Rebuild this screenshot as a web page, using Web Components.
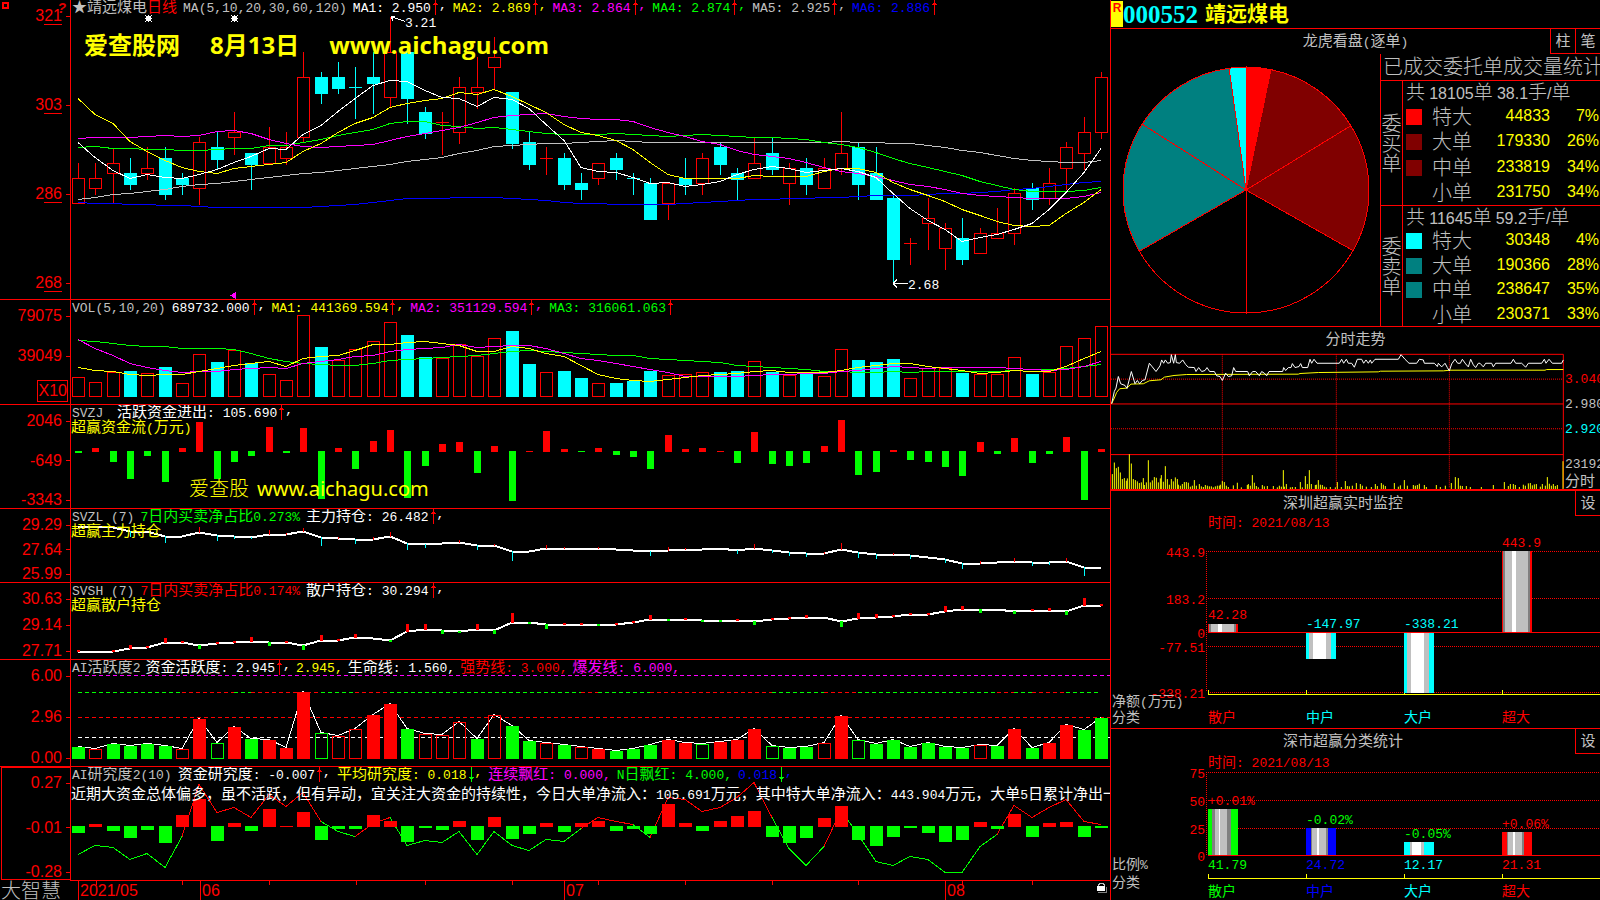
<!DOCTYPE html>
<html lang="zh-CN">
<head>
    <meta charset="UTF-8">
    <meta name="viewport" content="width=device-width, initial-scale=1.0">
    <title>靖远煤电 000552</title>
    <style>
        body {
            margin: 0;
            background: #000;
            color: #c0c0c0;
            font-family: "Noto Sans CJK SC", sans-serif;
            font-size: 15px;
        }
    </style>
</head>
<body>
    <stock-terminal></stock-terminal>

    <template id="tpl-terminal">
        <style>
            :host {
                display: grid;
                grid-template-columns: 1110fr 490fr;
                height: 100vh;
                min-height: 640px;
                overflow: hidden;
            }
            .left, .right { display: grid; min-width: 0; min-height: 0; grid-template-columns: minmax(0, 1fr); }
            .left { position: relative; grid-template-rows: 299fr 105fr 104fr 74fr 77fr 107fr 114fr 20fr; }
            .right { grid-template-rows: 28fr 298fr 163fr 239fr 172fr; border-left: 1px solid #f00; }
            .corner {
                position: absolute;
                top: 2px;
                left: 2px;
                display: flex;
                justify-content: space-between;
                width: 64px;
                color: #e00000;
                font: italic bold 14px/13px "Liberation Sans", sans-serif;
            }
            .corner i { width: 3px; height: 3px; border: 2px solid #f00; }
            .first { --edge: none; --axis-bottom: 8px; }
            .tight { --gap: 5px; }
            .title { line-height: 12px; white-space: nowrap; }
            .red { color: #f00; }
            .mark-top, .mark-mid { display: flex; color: #ff0; white-space: pre; }
            .mark-top {
                gap: 30px;
                margin: 16px 0 0 13px;
                font: bold 24px/28px "Open Sans", "Noto Sans CJK SC", sans-serif;
            }
            .mark-mid {
                gap: 8px;
                margin: 43px 0 0 118px;
                font: 20px/28px "Noto Sans", "Noto Sans CJK SC", sans-serif;
            }
            .mark-mid span { font-weight: 300; }
            .note { margin-top: 5px; }
            .unit {
                display: flex;
                justify-content: flex-end;
                align-items: flex-end;
                height: 14px;
                margin: 0 2px 2px 0;
            }
            .unit span {
                border: 1px solid #f00;
                padding: 0 0 0 1px;
                color: #f00;
                font: 16px/20px "Liberation Sans", sans-serif;
            }
        </style>
        <div class="left">
            <indicator-panel class="first">
                <axis-label slot="axis" text="3" under="21"></axis-label>
                <axis-label slot="axis" text="3" under="03"></axis-label>
                <axis-label slot="axis" text="2" under="86"></axis-label>
                <axis-label slot="axis" text="2" under="68"></axis-label>
                <div slot="legend" class="title">★靖远煤电<span class="red">日线</span></div>
                <read-out slot="legend" text="MA(5,10,20,30,60,120)"></read-out>
                <read-out slot="legend" color="#fff" text="MA1: 2.950" trend="up" comma></read-out>
                <read-out slot="legend" color="#ff0" text="MA2: 2.869" trend="up" comma></read-out>
                <read-out slot="legend" color="#f0f" text="MA3: 2.864" trend="up" comma></read-out>
                <read-out slot="legend" color="#0f0" text="MA4: 2.874" trend="up" comma></read-out>
                <read-out slot="legend" color="#c0c0c0" text="MA5: 2.925" trend="up" comma></read-out>
                <read-out slot="legend" color="#00f" text="MA6: 2.886" trend="up"></read-out>
                <div slot="note" class="mark-top"><span>爱查股网</span><span>8月13日</span><span>www.aichagu.com</span></div>
                <candle-chart></candle-chart>
            </indicator-panel>
            <indicator-panel>
                <axis-label slot="axis" text="79075"></axis-label>
                <axis-label slot="axis" text="39049"></axis-label>
                <div slot="axis" class="unit"><span>X10</span></div>
                <read-out slot="legend" text="VOL(5,10,20)"></read-out>
                <read-out slot="legend" color="#fff" text="689732.000" trend="up" comma></read-out>
                <read-out slot="legend" color="#ff0" text="MA1: 441369.594" trend="up" comma></read-out>
                <read-out slot="legend" color="#f0f" text="MA2: 351129.594" trend="up" comma></read-out>
                <read-out slot="legend" color="#0f0" text="MA3: 316061.063" trend="up"></read-out>
                <volume-chart></volume-chart>
            </indicator-panel>
            <indicator-panel>
                <axis-label slot="axis" text="2046"></axis-label>
                <axis-label slot="axis" text="-649"></axis-label>
                <axis-label slot="axis" text="-3343"></axis-label>
                <read-out slot="legend" text="SVZJ "></read-out>
                <read-out slot="legend" color="#fff" text="活跃资金进出: 105.690" trend="up" comma></read-out>
                <read-out slot="note" color="#ff0" text="超赢资金流(万元)"></read-out>
                <div slot="note" class="mark-mid"><span>爱查股</span>www.aichagu.com</div>
                <flow-chart></flow-chart>
            </indicator-panel>
            <indicator-panel>
                <axis-label slot="axis" text="29.29"></axis-label>
                <axis-label slot="axis" text="27.64"></axis-label>
                <axis-label slot="axis" text="25.99"></axis-label>
                <read-out slot="legend" text="SVZL (7)"></read-out>
                <read-out slot="legend" color="#0f0" text="7日内买卖净占比0.273%"></read-out>
                <read-out slot="legend" color="#fff" text="主力持仓: 26.482" trend="up" comma></read-out>
                <read-out slot="note" color="#ff0" text="超赢主力持仓"></read-out>
                <holding-chart kind="main"></holding-chart>
            </indicator-panel>
            <indicator-panel>
                <axis-label slot="axis" text="30.63"></axis-label>
                <axis-label slot="axis" text="29.14"></axis-label>
                <axis-label slot="axis" text="27.71"></axis-label>
                <read-out slot="legend" text="SVSH (7)"></read-out>
                <read-out slot="legend" color="#f00" text="7日内买卖净占比0.174%"></read-out>
                <read-out slot="legend" color="#fff" text="散户持仓: 30.294" trend="up" comma></read-out>
                <read-out slot="note" color="#ff0" text="超赢散户持仓"></read-out>
                <holding-chart kind="retail"></holding-chart>
            </indicator-panel>
            <indicator-panel class="tight">
                <axis-label slot="axis" text="6.00"></axis-label>
                <axis-label slot="axis" text="2.96"></axis-label>
                <axis-label slot="axis" text="0.00"></axis-label>
                <read-out slot="legend" text="AI活跃度2"></read-out>
                <read-out slot="legend" color="#fff" text="资金活跃度: 2.945" trend="up" comma></read-out>
                <read-out slot="legend" color="#ff0" text="2.945,"></read-out>
                <read-out slot="legend" color="#fff" text="生命线: 1.560,"></read-out>
                <read-out slot="legend" color="#f00" text="强势线: 3.000,"></read-out>
                <read-out slot="legend" color="#f0f" text="爆发线: 6.000,"></read-out>
                <active-chart></active-chart>
            </indicator-panel>
            <indicator-panel boxed>
                <axis-label slot="axis" text="0.27"></axis-label>
                <axis-label slot="axis" text="-0.01"></axis-label>
                <axis-label slot="axis" text="-0.28"></axis-label>
                <read-out slot="legend" text="AI研究度2(10)"></read-out>
                <read-out slot="legend" color="#fff" text="资金研究度: -0.007" trend="up" comma></read-out>
                <read-out slot="legend" color="#ff0" text="平均研究度: 0.018" trend="down" comma></read-out>
                <read-out slot="legend" color="#f0f" text="连续飘红: 0.000,"></read-out>
                <read-out slot="legend" color="#0f0" text="N日飘红: 4.000,"></read-out>
                <read-out slot="legend" color="#00f" text="0.018" trend="down" comma></read-out>
                <read-out slot="note" class="note" color="#fff" text="近期大资金总体偏多，虽不活跃，但有异动，宜关注大资金的持续性，今日大单净流入：105.691万元，其中特大单净流入：443.904万元，大单5日累计净出一"></read-out>
                <research-chart></research-chart>
            </indicator-panel>
            <date-axis></date-axis>
            <div class="corner"><i></i>?</div>
        </div>
        <div class="right">
            <quote-header code="000552" name="靖远煤电"></quote-header>
            <side-panel heading="龙虎看盘(逐单)" centered>
                <button slot="tools" type="button">柱</button>
                <button slot="tools" type="button">笔</button>
                <order-board></order-board>
            </side-panel>
            <side-panel heading="分时走势" centered>
                <minute-chart></minute-chart>
            </side-panel>
            <side-panel heading="深圳超赢实时监控" thick>
                <button slot="tools" type="button">设</button>
                <category-chart kind="net"></category-chart>
            </side-panel>
            <side-panel heading="深市超赢分类统计">
                <button slot="tools" type="button">设</button>
                <category-chart kind="share"></category-chart>
            </side-panel>
        </div>
    </template>

    <template id="tpl-panel">
        <style>
            :host {
                display: grid;
                grid-template-columns: 71px minmax(0, 1fr);
                grid-template-rows: minmax(0, 1fr);
                border-top: var(--edge, 1px solid #f00);
                min-height: 0;
                overflow: hidden;
            }
            .axis {
                display: flex;
                flex-direction: column;
                justify-content: space-between;
                box-sizing: border-box;
                padding: 8px 0 var(--axis-bottom, 0);
                border-right: 1px solid #f00;
            }
            :host([boxed]) .axis { outline: 1px solid #f00; outline-offset: -1px; margin-left: 1px; }
            .plot { display: grid; grid-template: minmax(0, 1fr) / minmax(0, 1fr); min-height: 0; }
            .plot > * { grid-area: 1 / 1; min-width: 0; }
            .chart { display: grid; min-height: 0; grid-template: minmax(0, 1fr) / minmax(0, 1fr); }
            .over { z-index: 1; }
            .legend { display: flex; gap: var(--gap, 6px); padding: 0 0 3px 1px; white-space: nowrap; }
        </style>
        <div class="axis"><slot name="axis"></slot></div>
        <div class="plot">
            <div class="chart"><slot></slot></div>
            <div class="over">
                <div class="legend"><slot name="legend"></slot></div>
                <slot name="note"></slot>
            </div>
        </div>
    </template>

    <template id="tpl-side">
        <style>
            :host { display: flex; flex-direction: column; border-top: 1px solid #f00; min-height: 0; overflow: hidden; }
            :host([thick]) { border-top-width: 2px; }
            header { display: grid; grid-template-columns: minmax(0, 1fr) auto; height: 25px; flex: none; }
            h2 { margin: 0; font-size: 15px; font-weight: normal; line-height: 21px; text-align: center; }
            :host([centered]) h2 { grid-area: 1 / 1 / 2 / 3; }
            h2 span { font-family: "Liberation Mono", monospace; font-size: 13px; }
            .tools { display: flex; grid-area: 1 / 2; height: 25px; }
            ::slotted(button) {
                width: 25px;
                height: 25px;
                padding: 0 0 2px;
                border: solid #f00;
                border-width: 0 0 1px 1px;
                background: #000;
                color: #c0c0c0;
                font: inherit;
                line-height: 22px;
                cursor: pointer;
            }
            .body { flex: 1; display: grid; grid-template: minmax(0, 1fr) / minmax(0, 1fr); min-height: 0; }
        </style>
        <header><h2></h2><div class="tools"><slot name="tools"></slot></div></header>
        <div class="body"><slot></slot></div>
    </template>

    <template id="tpl-board">
        <style>
            :host { display: grid; grid-template-columns: 269fr 220fr; min-height: 0; }
            svg { display: block; width: 100%; height: 100%; min-height: 0; }
            .stats { border-left: 1px solid #f00; display: flex; flex-direction: column; min-width: 0; font-size: 20px; font-weight: 300; white-space: nowrap; }
            h3 { margin: 0; padding-left: 2px; height: 26px; font-size: 20px; font-weight: 300; line-height: 23px; }
            section { display: grid; grid-template-columns: 22px minmax(0, 1fr); border-top: 1px solid #f00; min-height: 0; }
            section:nth-of-type(1) { flex: 125; }
            section:nth-of-type(2) { flex: 121; }
            .side { border-right: 1px solid #f00; display: grid; align-content: center; justify-content: center; line-height: 20px; }
            table { width: 100%; border-collapse: collapse; table-layout: fixed; }
            caption { height: 22px; padding-left: 3px; line-height: 19px; text-align: left; font-size: 19px; }
            th, td { height: 24px; padding: 0; line-height: 24px; font-weight: 300; }
            th { width: 71px; text-align: left; }
            td { color: #ff0; text-align: right; }
            td, .num { font-family: "Liberation Sans", sans-serif; font-size: 16px; font-weight: normal; }
            td:last-child { width: 49px; padding-right: 1px; }
            i { display: inline-block; width: 16px; height: 16px; margin: 0 10px 0 3px; vertical-align: -1px; }
        </style>
        <svg viewBox="1111 54 269 272"></svg>
        <div class="stats">
            <h3>已成交委托单成交量统计</h3>
        </div>
    </template>

    <script>
        // 中文用15px,数字和字母单独用等宽13px
        function mixed(text) {
            return text.replace(/[\x20-\x7e]+/g, run => `<span class="a">${run}</span>`);
        }

        function stamp(host, id) {
            const root = host.attachShadow({ mode: "open" });
            root.appendChild(document.getElementById(id).content.cloneNode(true));
            return root;
        }

        // 每根K线的中心
        const cx = i => Math.round(78 + 17.34 * i);

        function polyline(values, color, width = 1, from = 0) {
            const points = values.map((y, i) => `${cx(i + from)},${y + 0.5}`).join(" ");
            return `<polyline points="${points}" fill="none" stroke="${color}" stroke-width="${width}"/>`;
        }

        function box(x, y, w, h, color, filled) {
            if (filled) return `<rect x="${x}" y="${y}" width="${w}" height="${h}" fill="${color}"/>`;
            return `<rect x="${x + 0.5}" y="${y + 0.5}" width="${w - 1}" height="${Math.max(h - 1, 0)}" fill="none" stroke="${color}"/>`;
        }

        // 最高,实体上沿,实体下沿,最低;r为涨,c为跌
        const candles = `r163,178,203,203 r163,178,188,194 r148,163,173,203 c158,173,184,189 r147,168,173,179
            c147,158,194,199 c173,178,184,194 r137,142,188,204 c132,147,159,169 r112,132,137,154
            c153,153,164,189 r127,147,163,163 r132,147,158,164 r52,77,137,142 c72,77,93,103
            c62,77,88,93 c67,87,87,118 c52,77,83,113 r17,52,97,107 c52,52,98,123
            c107,112,133,138 r112,122,122,154 r77,87,132,143 r57,87,92,108 r37,57,67,88
            c92,92,143,148 c132,142,164,169 r147,158,158,174 c153,158,184,189 c173,183,189,199
            r163,163,178,184 c153,158,169,179 c173,178,178,194 c178,183,219,219 r183,183,203,219
            c158,178,184,194 r153,158,183,194 c143,147,164,174 c168,173,179,199 r137,163,178,178
            c138,153,169,174 r163,168,183,204 c158,168,184,194 r158,168,188,188 r112,153,168,174
            c142,147,184,199 c147,173,199,199 c193,198,259,283 r238,243,243,264 r198,218,223,249
            r223,228,248,269 c218,238,259,264 r228,233,253,253 r208,233,238,238 r188,193,233,244
            c183,188,199,209 r168,183,198,204 r142,147,168,189 r117,132,153,169 r72,77,132,138`
            .split(/\s+/).map(s => ({ up: s[0] === "r", v: s.slice(1).split(",").map(Number) }));

        const RED = "#f00", CYAN = "#0ff", GREEN = "#0f0";

        class StockTerminal extends HTMLElement {
            constructor() {
                super();
                stamp(this, "tpl-terminal");
            }
        }

        class IndicatorPanel extends HTMLElement {
            constructor() {
                super();
                stamp(this, "tpl-panel");
            }
        }

        class AxisLabel extends HTMLElement {
            connectedCallback() {
                const root = this.shadowRoot || this.attachShadow({ mode: "open" });
                const under = this.getAttribute("under") || "";
                root.innerHTML = `
                    <style>
                        :host {
                            display: flex;
                            justify-content: flex-end;
                            align-items: center;
                            height: 16px;
                            color: #f00;
                            font: 16px/16px "Liberation Sans", sans-serif;
                        }
                        :host::after { content: ""; width: 4px; height: 1px; margin-left: 4px; background: #f00; }
                        u { text-decoration: none; border-bottom: 1px solid #f00; }
                    </style>
                    <span>${this.getAttribute("text")}${under && `<u>${under}</u>`}</span>
                `;
            }
        }

        class ReadOut extends HTMLElement {
            connectedCallback() {
                const root = this.shadowRoot || this.attachShadow({ mode: "open" });
                const trend = this.getAttribute("trend");
                const arrows = {
                    up: `<svg viewBox="0 0 8 15"><path d="M4.500 0v15M2 4.500h5M3 3.500h3" stroke="#f00"/></svg>`,
                    down: `<svg viewBox="0 0 8 15"><path d="M4.500 0v15M2 10.500h5M3 11.500h3" stroke="#0f0"/></svg>`
                };
                root.innerHTML = `
                    <style>
                        :host { display: flex; height: 12px; color: ${this.getAttribute("color") || "#c0c0c0"}; line-height: 12px; white-space: pre; }
                        .a { font-family: "Liberation Mono", monospace; font-size: 13px; }
                        svg { width: 8px; height: 15px; flex: none; shape-rendering: crispEdges; }
                    </style>
                    <span>${mixed(this.getAttribute("text"))}</span>${arrows[trend] || ""}${this.hasAttribute("comma") ? '<span class="a">,</span>' : ""}
                `.trim().replace(/>\s+</g, "><");
            }
        }

        // 左侧各图的公共部分
        class PlotChart extends HTMLElement {
            connectedCallback() {
                const root = this.shadowRoot || this.attachShadow({ mode: "open" });
                const [top, height] = this.range();
                root.innerHTML = `
                    <style>
                        :host { display: block; min-height: 0; overflow: hidden; }
                        svg { display: block; width: 100%; height: 100%; shape-rendering: crispEdges; }
                        text { font: 13px "Liberation Mono", monospace; fill: #fff; }
                    </style>
                    <svg viewBox="71 ${top} 1039 ${height}" preserveAspectRatio="none">${this.draw()}</svg>
                `;
            }
        }

        class CandleChart extends PlotChart {
            range() { return [0, 299]; }
            draw() {
                // 十字线的实体只有一像素,按实心画
                let out = candles.map(({ up, v }, i) => {
                    const color = up ? RED : CYAN;
                    const x = cx(i);
                    const [high, top, bottom, low] = v;
                    return box(x, high, 1, top - high, color, true) +
                        box(x, bottom, 1, low - bottom + 1, color, true) +
                        box(x - 6, top, 13, bottom - top + 1, color, !up || top === bottom);
                }).join("");
                out += polyline([202,203,203,204,204,205,205,206,207,207,207,207,207,207,206,205,204,202,200,198,198,198,197,197,197,198,199,200,202,203,203,204,204,204,204,203,202,201,200,199,199,198,198,197,197,196,195,195,195,194,193,193,192,191,189,188,186,184,182,181], "#00f");
                out += polyline([199,197,194,193,191,189,186,184,183,181,179,177,175,173,172,170,168,166,164,161,159,157,153,150,146,145,144,143,143,142,141,140,141,142,142,142,142,142,142,142,142,142,142,142,141,142,142,143,143,145,147,150,152,155,158,160,161,162,162,160], "#c0c0c0");
                out += polyline([147,146,148,148,149,149,150,150,149,148,148,145,145,142,139,135,132,129,123,121,121,125,126,128,127,129,131,133,134,134,134,133,134,135,136,135,134,135,136,137,137,138,139,142,144,147,152,158,163,167,171,175,181,185,189,191,191,191,190,187], GREEN);
                out += polyline([138,137,137,137,136,135,136,135,131,130,133,139,143,146,147,146,145,144,140,136,133,130,127,122,117,115,114,113,116,118,119,119,121,127,132,136,141,144,150,154,156,158,162,167,171,173,176,180,184,186,189,193,195,196,197,198,198,198,196,192], "#f0f");
                out += polyline([98,114,123,141,151,160,167,171,173,168,166,164,162,151,143,132,123,117,107,103,100,98,92,94,89,96,104,112,124,132,135,140,149,162,174,178,178,178,178,175,176,176,176,171,168,168,172,182,189,195,201,209,215,221,225,226,225,213,202,189], "#ff0");
                out += polyline([142,157,170,178,174,177,178,174,169,162,156,148,149,134,125,111,98,85,80,81,90,97,98,106,97,99,108,124,140,167,171,172,177,183,182,186,184,181,174,169,166,168,172,170,168,171,177,193,208,220,229,241,237,234,229,223,209,192,172,148], "#fff");
                // 最高价、最低价标注
                out += `<path d="M391 16.500l14 5M391 16.500h4M391 16.500l2 4M893 283.500h15M893 283.500l4-4M893 283.500l4 4" fill="none" stroke="#fff"/>
                    <text x="405" y="27">3.21</text><text x="908" y="289">2.68</text>`;
                for (const x of [148, 234]) {
                    out += `<path d="M${x - 2} 16h5v5h-5zM${x} 15h1v7h-1zM${x - 3} 18h7v1h-7zM${x - 3} 15h1v1h-1zM${x + 3} 15h1v1h-1zM${x - 3} 21h1v1h-1zM${x + 3} 21h1v1h-1z" fill="#fff"/>`;
                }
                out += `<path d="M230 295.500l6-4v8z" fill="#f0f"/>`;
                return out;
            }
        }

        class VolumeChart extends PlotChart {
            range() { return [300, 104]; }
            draw() {
                const heights = [19,14,24,25,23,29,13,42,34,46,33,22,16,81,49,36,47,55,74,61,39,38,52,40,58,65,32,24,25,18,13,13,15,25,21,22,24,24,25,35,24,21,23,20,47,36,34,37,18,28,28,23,22,22,39,22,24,50,58,70];
                // 收盘高于昨收的阴线,量柱仍为红
                const gains = [6, 15, 16, 17, 35];
                let out = heights.map((h, i) => {
                    const up = candles[i].up || gains.includes(i);
                    return box(cx(i) - 6, 396 - h, 13, h + 1, up ? RED : CYAN, !up);
                }).join("");
                out += polyline([340,341,343,345,346,346,348,348,348,349,353,358,361,363,364,365,365,363,360,359,358,357,356,355,353,351,350,351,352,353,354,355,355,358,359,360,361,362,365,366,367,368,369,371,371,372,372,371,372,371,371,371,371,371,370,369,369,368,366,364], GREEN);
                out += polyline([339,348,355,363,367,370,372,371,371,369,368,367,368,363,361,359,356,355,351,349,348,347,344,347,346,345,345,348,353,358,360,363,366,369,372,376,376,376,376,375,374,374,373,373,371,370,368,366,367,368,367,367,367,367,368,369,370,369,366,361], "#f0f");
                out += polyline([367,370,371,374,375,374,374,371,368,365,363,361,366,358,356,355,350,344,344,342,341,343,345,351,351,346,348,353,356,365,374,378,380,381,379,377,375,374,373,371,370,372,372,372,370,367,365,363,363,366,368,370,373,372,370,371,371,366,358,351], "#ff0");
                return out;
            }
        }

        class FlowChart extends PlotChart {
            range() { return [405, 103]; }
            draw() {
                const flows = [-2,4,-11,-28,-5,-31,4,30,-28,-11,-5,25,-2,24,-48,4,-18,11,22,-47,-15,8,10,-22,6,-50,1,21,3,-1,4,-4,-6,-18,17,3,4,1,-12,20,-13,-15,-12,6,32,-24,-21,2,-9,-11,-16,-25,10,-3,14,-12,-3,15,-49,3];
                return flows.map((v, i) => v > 0
                    ? box(cx(i) - 3, 452 - v, 7, v, RED, true)
                    : box(cx(i) - 3, 451, 7, -v, GREEN, true)).join("");
            }
        }

        const holdings = {
            main: {
                range: [509, 73], tick: 1, down: CYAN,
                line: [526,526,527,531,531,536,536,532,535,536,537,534,534,531,537,538,539,539,536,543,544,543,542,545,545,551,551,548,548,548,548,549,550,551,550,549,549,548,550,548,550,552,553,553,549,552,554,554,555,557,559,563,563,562,561,562,562,561,567,567],
                ticks: { 3: -5, 5: -6, 7: 5, 8: -5, 9: -2, 10: -1, 11: 4, 12: 1, 13: 3, 14: -8, 15: 1, 16: -4, 17: 2, 18: 4, 19: -6, 20: -3, 22: 2, 23: -4, 24: 1, 25: -9, 27: 3, 28: 1, 30: 1, 33: -4, 34: 3, 35: 1, 38: -3, 39: 4, 40: -2, 41: -3, 42: -3, 43: 1, 44: 6, 45: -5, 46: -4, 47: 1, 48: -3, 50: -3, 51: -5, 52: 2, 54: 3, 55: -3, 56: -2, 57: 3, 58: -8 }
            },
            retail: {
                range: [583, 76], tick: 3, down: GREEN,
                line: [651,651,651,648,647,642,642,645,643,642,641,642,642,645,640,640,637,638,640,631,629,630,631,629,630,622,622,624,624,624,624,624,622,619,619,619,620,620,620,621,619,618,617,617,621,618,617,616,614,614,611,609,609,609,611,610,610,611,605,605],
                ticks: { 0: 1, 2: 1, 3: 3, 4: 1, 5: 4, 6: 1, 7: -3, 8: 1, 9: 1, 10: 4, 11: -3, 12: 1, 13: -4, 14: 5, 15: 1, 16: 3, 18: -1, 19: 7, 20: 5, 21: -3, 22: -1, 23: 5, 24: -3, 25: 9, 26: -1, 27: -4, 28: 1, 29: 1, 30: -1, 31: 1, 32: 1, 33: 4, 34: -1, 35: 1, 36: -1, 37: -1, 38: 1, 39: -3, 40: 1, 41: 1, 42: 2, 44: -5, 45: 5, 46: 3, 47: 1, 48: 1, 49: 1, 50: 5, 51: 3, 52: -3, 54: -2, 55: 1, 56: 2, 57: -3, 58: 7, 59: 1 }
            }
        };

        class HoldingChart extends PlotChart {
            get data() { return holdings[this.getAttribute("kind")]; }
            range() { return this.data.range; }
            draw() {
                const { line, ticks, tick, down } = this.data;
                let out = polyline(line, "#fff", 2);
                for (const [i, v] of Object.entries(ticks)) {
                    const x = cx(+i) - (tick > 1 ? 1 : 0);
                    out += v > 0
                        ? box(x, line[i] - v, tick, v + 1, RED, true)
                        : box(x, line[i], tick, 1 - v, down, true);
                }
                return out;
            }
        }

        class ActiveChart extends PlotChart {
            range() { return [660, 106]; }
            draw() {
                // 大写为实心,小写为空心
                const bars = "G12 r10 G15 G13 G15 G13 r10 R40 g16 R32 G20 R19 R11 R67 g26 r23 r30 R44 R55 G30 r25 r24 r37 G20 r44 G33 G18 r16 G14 r12 R10 G8 G10 G14 R19 R16 g15 R17 R19 R30 g13 G11 G12 r16 R43 g19 G15 G19 G12 G16 G12 G11 r14 G13 R30 G11 R16 R34 G29 G41"
                    .split(" ").map(s => [s[0], +s.slice(1)]);
                const dash = (y, color, x1, x2) => `<path d="M${x1} ${y}.500H${x2}" stroke="${color}" stroke-dasharray="4 3"/>`;
                let out = dash(675, "#f0f", 78, 1110) + dash(717, RED, 78, 1110) + dash(737, "#fff", 78, 1110);
                // 绿红交替的分段点
                const turns = [0, 6, 9, 10, 14, 16, 18, 29, 30, 33, 40, 43, 45, 53, 54, 55, 57, 59];
                for (let k = 0; k + 1 < turns.length; k++) {
                    out += dash(692, k % 2 ? RED : GREEN, cx(turns[k]), cx(turns[k + 1]));
                }
                out += polyline(bars.map(b => 758 - b[1]), "#fff");
                out += bars.map(([type, h], i) => {
                    const filled = type < "a";
                    return box(cx(i) - 6, 759 - h, 13, h, type.toUpperCase() === "R" ? RED : GREEN, filled);
                }).join("");
                return out;
            }
        }

        class ResearchChart extends PlotChart {
            range() { return [767, 113]; }
            draw() {
                const line = [854,845,847,859,853,867,836,784,812,807,817,794,806,792,821,831,836,823,817,845,840,842,831,854,831,845,850,839,841,828,817,821,824,837,797,799,811,807,797,782,817,848,865,846,810,834,861,865,856,859,872,872,846,834,805,817,807,799,821,824];
                const turns = [0, 6, 14, 16, 18, 29, 32, 33, 40, 43, 44, 53, 59];
                const bars = [-7,3,-5,-12,-4,-17,12,28,-15,4,-5,18,1,15,-14,-3,-3,12,6,-16,-2,-4,6,-14,10,-13,-8,4,-6,4,6,-5,-3,-8,23,4,-5,6,11,16,-11,-17,-12,9,21,-14,-20,-11,-2,-7,-16,-14,5,-3,13,-11,4,5,-11,-2];
                return turns.slice(0, -1).map((t, k) => polyline(line.slice(t, turns[k + 1] + 1), k % 2 ? RED : GREEN, 1, t)).join("") +
                    bars.map((v, i) => v > 0
                        ? box(cx(i) - 6, 827 - v, 13, v, RED, true)
                        : box(cx(i) - 6, 826, 13, -v, GREEN, true)).join("");
            }
        }

        class DateAxis extends HTMLElement {
            constructor() {
                super();
                const shadow = this.attachShadow({ mode: "open" });
                const long = [78, 200, 564, 945].map(x => `M${x}.500 881v19`).join("");
                const short = [96, 182, 269, 356, 425, 512, 598, 685, 772, 858, 962, 1032].map(x => `M${x}.500 881v4`).join("");
                shadow.innerHTML = `
                    <style>
                        :host { display: grid; grid-template-columns: 70px minmax(0, 1fr); min-height: 0; }
                        .brand { padding-left: 1px; font-size: 20px; font-weight: 300; line-height: 20px; white-space: nowrap; }
                        .dates { border-top: 1px solid #f00; min-height: 0; }
                        svg { display: block; width: 100%; height: 100%; shape-rendering: crispEdges; }
                        text { font: 16px "Liberation Sans", sans-serif; fill: #f00; }
                    </style>
                    <div class="brand">大智慧</div>
                    <div class="dates">
                        <svg viewBox="70 881 1040 19" preserveAspectRatio="none">
                            <path d="${long}${short}" stroke="#f00"/>
                            <text x="80" y="896">2021/05</text>
                            <text x="202" y="896">06</text>
                            <text x="566" y="896">07</text>
                            <text x="947" y="896">08</text>
                            <path d="M1098.500 886v-2h1v-1h4v1h1v2" fill="none" stroke="#c0c0c0"/>
                            <path d="M1098 892.500h8.500v-6" fill="none" stroke="#808080"/>
                            <path d="M1097 886h8v5h-8z" fill="#fff"/>
                        </svg>
                    </div>
                `;
            }
        }

        class QuoteHeader extends HTMLElement {
            connectedCallback() {
                const root = this.shadowRoot || this.attachShadow({ mode: "open" });
                root.innerHTML = `
                    <style>
                        :host { display: flex; min-height: 0; white-space: nowrap; }
                        .flag { width: 12px; margin: 1px 0; background: #ff0; color: #f00; font: bold 12px/15px "Liberation Sans", sans-serif; text-align: center; }
                        .code { color: #0ff; font: bold 25px/29px "Liberation Serif", serif; }
                        .name { margin-left: 7px; color: #ff0; font-size: 21px; font-weight: bold; line-height: 25px; }
                    </style>
                    <span class="flag">R</span>
                    <span class="code">${this.getAttribute("code")}</span>
                    <span class="name">${this.getAttribute("name")}</span>
                `;
            }
        }

        class SidePanel extends HTMLElement {
            constructor() {
                super();
                stamp(this, "tpl-side");
            }
            connectedCallback() {
                this.shadowRoot.querySelector("h2").innerHTML = mixed(this.getAttribute("heading"));
            }
        }

        const orders = [
            { side: "委买单", total: ["18105", "38.1"], rows: [["特大", 44833, 7, "#f00"], ["大单", 179330, 26, "#800000"], ["中单", 233819, 34, "#800000"], ["小单", 231750, 34, "#000"]] },
            { side: "委卖单", total: ["11645", "59.2"], rows: [["特大", 30348, 4, "#0ff"], ["大单", 190366, 28, "#008080"], ["中单", 238647, 35, "#008080"], ["小单", 230371, 33, "#000"]] }
        ];

        class OrderBoard extends HTMLElement {
            constructor() {
                super();
                const root = stamp(this, "tpl-board");
                root.querySelector("svg").innerHTML = this.pie();
                for (const { side, total, rows } of orders) {
                    const section = document.createElement("section");
                    section.innerHTML = `
                        <div class="side">${[...side].map(c => `<span>${c}</span>`).join("")}</div>
                        <table>
                            <caption>共 <span class="num">${total[0]}</span>单 <span class="num">${total[1]}</span>手<span class="num">/</span>单</caption>
                            ${rows.map(([name, amount, percent, color]) => `<tr><th scope="row"><i style="background:${color}"></i>${name}</th><td>${amount}</td><td>${percent}%</td></tr>`).join("")}
                        </table>
                    `;
                    root.querySelector(".stats").appendChild(section);
                }
            }

            // 右半圆为买单,左半圆为卖单
            pie() {
                const x0 = 1246, y0 = 190, r = 123;
                let out = "";
                orders.forEach(({ rows }, k) => {
                    const sum = rows.reduce((s, row) => s + row[1], 0);
                    const dir = k ? -1 : 1;
                    let angle = 0;
                    for (const [, amount, , color] of rows) {
                        const next = angle + dir * Math.PI * amount / sum;
                        const p = a => `${(x0 + r * Math.sin(a)).toFixed(1)} ${(y0 - r * Math.cos(a)).toFixed(1)}`;
                        out += `<path d="M${x0} ${y0}L${p(angle)}A${r} ${r} 0 0 ${k ? 0 : 1} ${p(next)}Z" fill="${color}" stroke="#f00"/>`;
                        angle = next;
                    }
                });
                return `<g shape-rendering="crispEdges">${out}</g>`;
            }
        }

        class MinuteChart extends HTMLElement {
            constructor() {
                super();
                const shadow = this.attachShadow({ mode: "open" });
                const price = "20,252 28,215 33,205 40,170 47,192 60,197 66,206 79,155 90,192 97,182 104,192 112,182 120,180 133,130 142,141 153,155 165,138 170,120 176,130 181,120 188,130 196,128 199,104 206,130 211,104 214,128 224,130 233,120 242,134 250,142 268,143 273,155 281,143 290,155 300,152 306,143 314,155 328,155 335,168 345,170 352,182 362,160 370,170 380,168 386,143 392,155 428,155 433,168 443,155 452,155 463,168 470,155 478,160 485,168 492,155 533,155 536,143 542,152 550,143 558,143 562,131 570,143 582,140 587,131 592,143 608,143 615,118 620,130 627,118 636,130 703,130 710,118 716,130 724,118 730,130 740,130 748,142 757,118 770,118 776,130 783,120 790,130 796,120 800,130 810,118 880,118 888,104 900,118 912,130 935,130 943,118 955,120 958,130 988,130 997,140 1000,130 1010,141 1020,130 1027,143 1033,153 1040,132 1050,118 1058,130 1066,130 1072,118 1082,132 1090,141 1097,118 1105,135 1112,143 1120,130 1125,130 1135,141 1142,130 1160,130 1165,141 1172,130 1218,130 1225,118 1232,130 1250,130 1262,142 1270,130 1310,130 1318,118 1323,130 1332,118 1342,130 1370,130 1375,120";
                const average = "20,252 28,235 35,218 44,207 66,205 78,193 115,192 133,183 168,180 178,172 207,167 245,164 580,163 585,161 640,158 820,156 826,154 1015,153 1035,151 1320,151 1325,149 1375,149";
                const volume = "22,465 28,430 34,447 40,443 46,460 52,480 58,477 64,485 67,478 73,405 79,433 85,480 91,483 97,487 103,492 109,490 115,477 118,498 124,490 130,423 136,490 142,484 148,474 154,476 160,490 166,478 169,468 175,488 181,441 187,480 193,497 199,480 205,487 211,475 217,480 220,497 226,500 232,495 238,489 244,489 250,491 256,503 262,500 268,483 274,500 283,495 289,502 295,504 301,498 307,500 313,502 319,502 325,505 331,502 337,500 343,500 346,497 352,486 358,489 364,500 370,504 385,499 397,491 409,505 427,498 430,495 436,500 442,468 448,491 454,501 460,505 472,498 478,502 487,501 505,501 517,505 523,500 529,503 535,453 538,503 544,495 556,505 562,504 571,504 586,489 592,505 601,471 607,495 613,453 619,495 631,498 634,497 640,483 646,497 652,498 658,503 664,505 676,504 691,505 697,489 709,504 721,486 727,501 733,502 742,500 754,492 766,495 772,500 784,503 799,504 811,495 817,501 829,492 835,497 841,501 868,492 880,503 886,499 898,483 907,500 925,498 931,500 937,498 943,494 958,498 964,504 994,498 1006,504 1021,500 1039,492 1051,474 1060,477 1066,500 1072,501 1084,501 1096,504 1129,504 1165,498 1198,489 1210,501 1216,495 1225,495 1231,498 1243,504 1255,497 1261,500 1270,493 1276,492 1282,499 1288,496 1294,495 1306,503 1312,495 1321,500 1327,474 1333,494 1339,500 1345,495 1351,501 1357,498 1374,426";
                const rows = [36, 25, 25, 35, 16].map(n => `minmax(0, ${n}fr)`).join(" ");
                shadow.innerHTML = `
                    <style>
                        :host { display: grid; grid-template: minmax(0, 1fr) / 453fr 36fr; min-height: 0; overflow: hidden; }
                        svg { display: block; width: 100%; height: 100%; shape-rendering: crispEdges; overflow: hidden; min-height: 0; }
                        svg * { vector-effect: non-scaling-stroke; fill: none; }
                        .grid { stroke: #f00; }
                        .dots { stroke: #f00; stroke-dasharray: 1 1; }
                        .scale { display: grid; grid-template-rows: ${rows}; min-width: 0; white-space: nowrap; line-height: 16px; }
                        .scale span { align-self: end; padding-left: 1px; font-family: "Liberation Mono", monospace; font-size: 13px; }
                        .scale .cn { font-family: inherit; font-size: 15px; line-height: 18px; }
                    </style>
                    <svg viewBox="18 96 1359 414" preserveAspectRatio="none">
                        <path class="dots" d="M18 178H1375M18 328H1375M352 103V508M694 103V508M1033 103V508"/>
                        <path class="grid" d="M18 103H1375V508M18 253H1375M18 406H1375"/>
                        <path stroke="#ff0" d="${volume.split(" ").map(p => `M${p.replace(",", " ")}V510`).join("")}"/>
                        <polyline stroke="#ff0" points="${average}"/>
                        <polyline stroke="#fff" points="${price}"/>
                    </svg>
                    <div class="scale">
                        <span style="color:#f00">3.040</span>
                        <span>2.980</span>
                        <span style="color:#0ff">2.920</span>
                        <span>23192</span>
                        <span class="cn">分时</span>
                    </div>
                `;
            }
        }

        // 柱子由竖条拼成:e边缘色 d深灰 l浅灰 w白
        const TONES = { d: "#808080", l: "#c0c0c0", w: "#fff" };

        const categories = {
            net: {
                view: [517, 211], date: 528, axis: 694, names: 722,
                levels: [["443.9", 552], ["183.2", 599], ["0", 632, true], ["-77.51", 646], ["-338.21", 692]],
                left: [["净额(万元)", 706], ["分类", 722]],
                bars: [
                    { name: "散户", color: RED, top: 624, bottom: 632, label: ["42.28", 620, RED], widths: [1, 2, 7, 4, 12, 2, 2], tones: "edlwlde" },
                    { name: "中户", color: CYAN, top: 633, bottom: 659, label: ["-147.97", 628, CYAN], widths: [3, 4, 13, 5, 5], tones: "elwle" },
                    { name: "大户", color: CYAN, top: 633, bottom: 693, label: ["-338.21", 628, CYAN], widths: [3, 4, 13, 5, 5], tones: "elwle" },
                    { name: "超大", color: RED, top: 552, bottom: 632, label: ["443.9", 548, RED], widths: [1, 2, 7, 4, 12, 2, 2], tones: "edlwlde" }
                ]
            },
            share: {
                view: [754, 146], date: 767, axis: 878, names: 896,
                levels: [["75", 772], ["50", 800], ["25", 828], ["0", 855, true]],
                left: [["比例%", 869], ["分类", 887]],
                bars: [
                    { name: "散户", color: GREEN, top: 809, bottom: 855, label: ["+0.01%", 805, RED], value: "41.79", widths: [4, 3, 4, 1, 7, 4, 7], tones: "edlwlde" },
                    { name: "中户", color: "#00f", top: 828, bottom: 855, label: ["-0.02%", 824, GREEN], value: "24.72", widths: [5, 1, 5, 2, 7, 2, 8], tones: "edlwlde" },
                    { name: "大户", color: CYAN, top: 842, bottom: 855, label: ["-0.05%", 838, GREEN], value: "12.17", widths: [6, 2, 9, 3, 10], tones: "elwle" },
                    { name: "超大", color: RED, top: 832, bottom: 855, label: ["+0.06%", 828, RED], value: "21.31", widths: [5, 1, 5, 2, 7, 2, 8], tones: "edlwlde" }
                ]
            }
        };

        class CategoryChart extends HTMLElement {
            connectedCallback() {
                const root = this.shadowRoot || this.attachShadow({ mode: "open" });
                const data = categories[this.getAttribute("kind")];
                const num = (x, y, text, color, anchor = "start") => `<text class="a" x="${x}" y="${y}" fill="${color}" text-anchor="${anchor}">${text}</text>`;
                const cn = (x, y, text, color) => `<text x="${x}" y="${y}" fill="${color}">${text.replace(/[\x20-\x7e]+/g, run => `<tspan class="a">${run}</tspan>`)}</text>`;
                let out = `<path class="dots" d="M1206.500 ${data.levels[0][1]}V${data.levels.at(-1)[1]}"/>`;
                for (const [text, y, solid] of data.levels) {
                    out += `<path class="${solid ? "line" : "dots"}" d="M1208 ${y}.500H1600"/>`;
                    out += num(1205, y + 6, text, RED, "end");
                }
                data.bars.forEach((bar, i) => {
                    let x = 1208 + 98 * i;
                    out += num(x, bar.label[1], bar.label[0], bar.label[2]);
                    if (bar.value) out += num(x, 869, bar.value, bar.color);
                    out += cn(x, data.names, bar.name, bar.color);
                    out += `<path d="M${x}.500 ${data.axis - 4}v4" stroke="#ff0"/>`;
                    bar.widths.forEach((w, k) => {
                        out += box(x, bar.top, w, bar.bottom - bar.top, TONES[bar.tones[k]] || bar.color, true);
                        x += w;
                    });
                });
                out += `<path d="M1208 ${data.axis}.500H1600" stroke="#ff0"/>`;
                out += cn(1208, data.date, "时间: 2021/08/13", RED);
                for (const [text, y] of data.left) out += cn(1112, y, text, "#c0c0c0");
                root.innerHTML = `
                    <style>
                        :host { display: block; min-height: 0; overflow: hidden; }
                        svg { display: block; width: 100%; height: 100%; shape-rendering: crispEdges; }
                        text { font-size: 14px; }
                        .a { font: 13px "Liberation Mono", monospace; }
                        .line { stroke: #f00; }
                        .dots { stroke: #f00; stroke-dasharray: 1 1; }
                    </style>
                    <svg viewBox="1111 ${data.view[0]} 489 ${data.view[1]}" preserveAspectRatio="none">${out}</svg>
                `;
            }
        }

        customElements.define("axis-label", AxisLabel);
        customElements.define("read-out", ReadOut);
        customElements.define("candle-chart", CandleChart);
        customElements.define("volume-chart", VolumeChart);
        customElements.define("flow-chart", FlowChart);
        customElements.define("holding-chart", HoldingChart);
        customElements.define("active-chart", ActiveChart);
        customElements.define("research-chart", ResearchChart);
        customElements.define("date-axis", DateAxis);
        customElements.define("indicator-panel", IndicatorPanel);
        customElements.define("quote-header", QuoteHeader);
        customElements.define("order-board", OrderBoard);
        customElements.define("minute-chart", MinuteChart);
        customElements.define("category-chart", CategoryChart);
        customElements.define("side-panel", SidePanel);
        customElements.define("stock-terminal", StockTerminal);
    </script>
</body>
</html>
